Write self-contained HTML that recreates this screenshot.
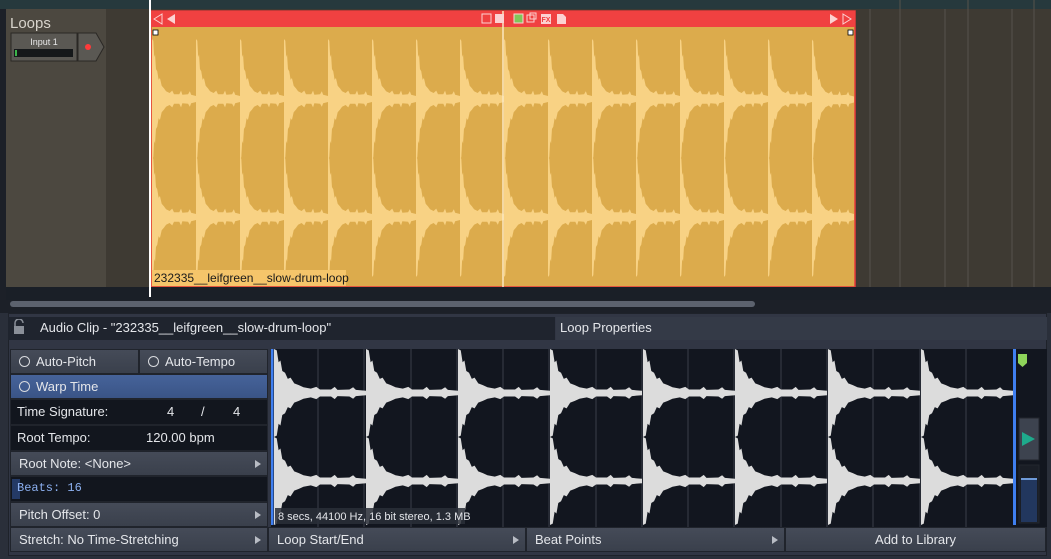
<!DOCTYPE html>
<html><head><meta charset="utf-8"><style>
*{margin:0;padding:0;box-sizing:border-box}
body{width:1051px;height:559px;overflow:hidden;background:#2a2f3a;font-family:"Liberation Sans",sans-serif;position:relative}
.a{position:absolute}
.btn{position:absolute;background:linear-gradient(#454b58,#3a404c);border:1px solid #20242c;color:#e4e6ea;font-size:13px;line-height:23px;padding-left:8px}
.dk{position:absolute;background:#12161e;border:1px solid #20242c;color:#e4e6ea;font-size:13px;line-height:23px;padding-left:6px}
.arr{position:absolute;right:6px;top:8px;width:0;height:0;border-left:6px solid #b8bcc4;border-top:4px solid transparent;border-bottom:4px solid transparent}
.rad{display:inline-block;width:11px;height:11px;border:1.5px solid #d8dade;border-radius:50%;vertical-align:-1px;margin-right:6px}
</style></head><body>
<svg class="a" style="left:0;top:0" width="1051" height="313">
<defs>
<path id="h" d="M0,0 L0,-1 L0.03,-0.97 L0.05,-0.7 L0.07,-0.74 L0.09,-0.5 L0.12,-0.46 L0.15,-0.32 L0.18,-0.35 L0.22,-0.22 L0.27,-0.18 L0.32,-0.13 L0.4,-0.1 L0.46,-0.14 L0.5,-0.08 L0.62,-0.08 L0.66,-0.14 L0.69,-0.07 L0.82,-0.08 L0.86,-0.13 L0.89,-0.07 L1,-0.05 L1,0.05 L0.89,0.07 L0.86,0.13 L0.82,0.08 L0.69,0.07 L0.66,0.14 L0.62,0.08 L0.5,0.08 L0.46,0.14 L0.4,0.1 L0.32,0.13 L0.27,0.18 L0.22,0.22 L0.18,0.35 L0.15,0.32 L0.12,0.46 L0.09,0.5 L0.07,0.74 L0.05,0.7 L0.03,0.97 L0,1 Z"/>
</defs>
<rect width="1051" height="313" fill="#1c2028"/>
<rect x="0" y="0" width="1051" height="9" fill="#26393d"/>
<rect x="6" y="9" width="1045" height="278" fill="#3e3a33"/>
<rect x="6" y="9" width="100" height="278" fill="#4c4840"/>
<g stroke="#55534c" stroke-width="1">
<line x1="870" y1="9" x2="870" y2="287"/><line x1="900" y1="0" x2="900" y2="287"/><line x1="945" y1="9" x2="945" y2="287"/><line x1="968" y1="0" x2="968" y2="287"/><line x1="1012" y1="9" x2="1012" y2="287"/><line x1="1034" y1="0" x2="1034" y2="287"/></g>
<text x="10" y="28" font-family="Liberation Sans" font-size="15" fill="#d8d4cc">Loops</text>
<rect x="11" y="33" width="66" height="28" fill="#5a5853" stroke="#2a2825"/>
<text x="44" y="45" text-anchor="middle" font-family="Liberation Sans" font-size="9" fill="#e8e8e8">Input 1</text>
<rect x="14" y="49" width="59" height="8" fill="#15181a"/><rect x="15" y="50" width="2" height="6" fill="#3bb54a"/>
<path d="M78,33 L96,33 L104,47 L96,61 L78,61 Z" fill="#5a5853" stroke="#2a2825"/>
<circle cx="88" cy="47" r="3" fill="#ff3a3a"/>
<rect x="151" y="11" width="704" height="276" fill="#dcab4c" stroke="#e83a3a" stroke-width="1.5"/>
<rect x="151" y="11" width="704" height="16" fill="#f04141"/>
<g fill="#f8d284">
<use href="#h" transform="translate(152,99) scale(44,60)"/><use href="#h" transform="translate(196,99) scale(44,60)"/><use href="#h" transform="translate(240,99) scale(44,60)"/><use href="#h" transform="translate(284,99) scale(44,60)"/><use href="#h" transform="translate(328,99) scale(44,60)"/><use href="#h" transform="translate(372,99) scale(44,60)"/><use href="#h" transform="translate(416,99) scale(44,60)"/><use href="#h" transform="translate(460,99) scale(44,60)"/><use href="#h" transform="translate(504,99) scale(44,60)"/><use href="#h" transform="translate(548,99) scale(44,60)"/><use href="#h" transform="translate(592,99) scale(44,60)"/><use href="#h" transform="translate(636,99) scale(44,60)"/><use href="#h" transform="translate(680,99) scale(44,60)"/><use href="#h" transform="translate(724,99) scale(44,60)"/><use href="#h" transform="translate(768,99) scale(44,60)"/><use href="#h" transform="translate(812,99.5) scale(42,60)"/>
<use href="#h" transform="translate(152,217) scale(44,60)"/><use href="#h" transform="translate(196,217) scale(44,60)"/><use href="#h" transform="translate(240,217) scale(44,60)"/><use href="#h" transform="translate(284,217) scale(44,60)"/><use href="#h" transform="translate(328,217) scale(44,60)"/><use href="#h" transform="translate(372,217) scale(44,60)"/><use href="#h" transform="translate(416,217) scale(44,60)"/><use href="#h" transform="translate(460,217) scale(44,60)"/><use href="#h" transform="translate(504,217) scale(44,60)"/><use href="#h" transform="translate(548,217) scale(44,60)"/><use href="#h" transform="translate(592,217) scale(44,60)"/><use href="#h" transform="translate(636,217) scale(44,60)"/><use href="#h" transform="translate(680,217) scale(44,60)"/><use href="#h" transform="translate(724,217) scale(44,60)"/><use href="#h" transform="translate(768,217) scale(44,60)"/><use href="#h" transform="translate(812,217) scale(42,60)"/>
</g>
<line x1="503" y1="11" x2="503" y2="287" stroke="#fbe8c0" stroke-width="1.5"/>
<rect x="152" y="270" width="194" height="16" fill="#f5c56a"/>
<text x="154" y="282" font-family="Liberation Sans" font-size="12" fill="#1a1a1a">232335__leifgreen__slow-drum-loop</text>
<rect x="153" y="30" width="5" height="5" fill="#fff" stroke="#000" stroke-width="0.8"/>
<rect x="848" y="30" width="5" height="5" fill="#fff" stroke="#000" stroke-width="0.8"/>
<path d="M154,19 L162,14 L162,24 Z" fill="none" stroke="#fcd2d2" stroke-width="1"/><path d="M167,19 L175,14 L175,24 Z" fill="#fcd2d2"/>
<path d="M830,14 L838,19 L830,24 Z" fill="#fcd2d2"/><path d="M843,14 L851,19 L843,24 Z" fill="none" stroke="#fcd2d2" stroke-width="1"/>
<rect x="482" y="14" width="9" height="9" fill="none" stroke="#fcd2d2"/><rect x="495" y="14" width="9" height="9" fill="#fcd2d2"/>
<rect x="514" y="14" width="9" height="9" fill="#7fc65a" stroke="#fcd2d2"/>
<rect x="527" y="15" width="7" height="7" fill="none" stroke="#fcd2d2"/><rect x="530" y="13" width="6" height="6" fill="none" stroke="#fcd2d2"/>
<rect x="541" y="14" width="10" height="10" fill="#fcd2d2"/><text x="546" y="22" text-anchor="middle" font-family="Liberation Sans" font-size="7" font-weight="bold" fill="#f04141">FX</text>
<path d="M557,14 L563,14 L566,17 L566,24 L557,24 Z" fill="#fcd2d2"/>
<rect x="6" y="287" width="1045" height="13" fill="#1a1f27"/>
<rect x="10" y="301" width="745" height="6" rx="3" fill="#5c626e"/>
<line x1="150" y1="0" x2="150" y2="297" stroke="#fff" stroke-width="2"/>
</svg>
<div class="a" style="left:8px;top:313px;width:1039px;height:243px;background:#313644;border:1px solid #1e222a"></div>
<div class="a" style="left:8px;top:317px;width:547px;height:23px;background:#1f242e"></div>
<div class="a" style="left:556px;top:317px;width:491px;height:23px;background:#343a47"></div>
<svg class="a" style="left:13px;top:319px" width="12" height="16"><path d="M2,7 L2,4 A4,4 0 0 1 10,4" fill="none" stroke="#8a8f98" stroke-width="1.5"/><rect x="1" y="7" width="10" height="8" fill="#8a8f98"/></svg>
<div class="a" style="left:40px;top:320px;font-size:13px;color:#e4e6ea">Audio Clip - "232335__leifgreen__slow-drum-loop"</div>
<div class="a" style="left:560px;top:320px;font-size:13px;color:#e4e6ea">Loop Properties</div>
<div class="btn" style="left:10px;top:349px;width:129px;height:25px"><span class="rad"></span>Auto-Pitch</div>
<div class="btn" style="left:139px;top:349px;width:129px;height:25px"><span class="rad"></span>Auto-Tempo</div>
<div class="btn" style="left:10px;top:374px;width:258px;height:25px;background:linear-gradient(#46639a,#3a5486)"><span class="rad"></span>Warp Time</div>
<div class="dk" style="left:10px;top:399px;width:258px;height:26px">Time Signature:<span class="a" style="left:156px">4</span><span class="a" style="left:190px">/</span><span class="a" style="left:222px">4</span></div>
<div class="dk" style="left:10px;top:425px;width:258px;height:26px">Root Tempo:<span class="a" style="left:135px">120.00 bpm</span></div>
<div class="btn" style="left:10px;top:451px;width:258px;height:25px">Root Note: &lt;None&gt;<span class="arr"></span></div>
<div class="dk" style="left:10px;top:476px;width:258px;height:26px;color:#8cb0f0;font-family:'Liberation Mono',monospace;font-size:12px"><span class="a" style="left:1px;top:2px;width:8px;height:20px;background:#243a66"></span><span style="position:relative">Beats: 16</span></div>
<div class="btn" style="left:10px;top:502px;width:258px;height:25px">Pitch Offset: 0<span class="arr"></span></div>
<div class="btn" style="left:10px;top:527px;width:258px;height:25px">Stretch: No Time-Stretching<span class="arr"></span></div>
<div class="btn" style="left:268px;top:527px;width:258px;height:25px">Loop Start/End<span class="arr"></span></div>
<div class="btn" style="left:526px;top:527px;width:259px;height:25px">Beat Points<span class="arr"></span></div>
<div class="btn" style="left:785px;top:527px;width:261px;height:25px;text-align:center;padding:0">Add to Library</div>
<svg class="a" style="left:271px;top:349px" width="776" height="178">
<rect width="776" height="178" fill="#12161f"/>
<g stroke="#3a3f49" stroke-width="1">
<line x1="47" y1="0" x2="47" y2="178"/><line x1="140" y1="0" x2="140" y2="178"/><line x1="232" y1="0" x2="232" y2="178"/><line x1="325" y1="0" x2="325" y2="178"/><line x1="417" y1="0" x2="417" y2="178"/><line x1="510" y1="0" x2="510" y2="178"/><line x1="602" y1="0" x2="602" y2="178"/><line x1="695" y1="0" x2="695" y2="178"/>
<line x1="93" y1="0" x2="93" y2="178"/><line x1="186" y1="0" x2="186" y2="178"/><line x1="278" y1="0" x2="278" y2="178"/><line x1="371" y1="0" x2="371" y2="178"/><line x1="463" y1="0" x2="463" y2="178"/><line x1="556" y1="0" x2="556" y2="178"/><line x1="649" y1="0" x2="649" y2="178"/></g>
<g fill="#dcdcdc">
<use href="#h" transform="translate(3,44) scale(92,44)"/><use href="#h" transform="translate(95,44) scale(92,44)"/><use href="#h" transform="translate(187,44) scale(92,44)"/><use href="#h" transform="translate(279,44) scale(92,44)"/><use href="#h" transform="translate(372,44) scale(92,44)"/><use href="#h" transform="translate(464,44) scale(92,44)"/><use href="#h" transform="translate(557,44) scale(92,44)"/><use href="#h" transform="translate(650,44) scale(92,44)"/>
<use href="#h" transform="translate(3,132) scale(92,44)"/><use href="#h" transform="translate(95,132) scale(92,44)"/><use href="#h" transform="translate(187,132) scale(92,44)"/><use href="#h" transform="translate(279,132) scale(92,44)"/><use href="#h" transform="translate(372,132) scale(92,44)"/><use href="#h" transform="translate(464,132) scale(92,44)"/><use href="#h" transform="translate(557,132) scale(92,44)"/><use href="#h" transform="translate(650,132) scale(92,44)"/>
</g>
<rect x="0" y="0" width="2.5" height="176" fill="#3f7ff0"/>
<rect x="742" y="0" width="3" height="176" fill="#3f7ff0"/>
<rect x="745" y="0" width="31" height="178" fill="#12161f"/>
<path d="M747,5 L756,5 L756,14 L751.5,18 L747,14 Z" fill="#8ed45a"/>
<rect x="748" y="69" width="20" height="42" fill="#3d434f" stroke="#22262e"/>
<path d="M751,83 L764,90 L751,97 Z" fill="#1eaa8c"/>
<rect x="748" y="116" width="20" height="58" fill="#1a1e26" stroke="#22262e"/>
<rect x="750" y="129" width="16" height="44" fill="#22375e"/><rect x="750" y="129" width="16" height="2" fill="#6e9ad8"/>
<rect x="4" y="159" width="190" height="16" fill="#2a2f38" opacity="0.85"/>
<text x="7" y="171" font-family="Liberation Sans" font-size="11" fill="#e4e6ea">8 secs, 44100 Hz, 16 bit stereo, 1.3 MB</text>
</svg>
</body></html>
